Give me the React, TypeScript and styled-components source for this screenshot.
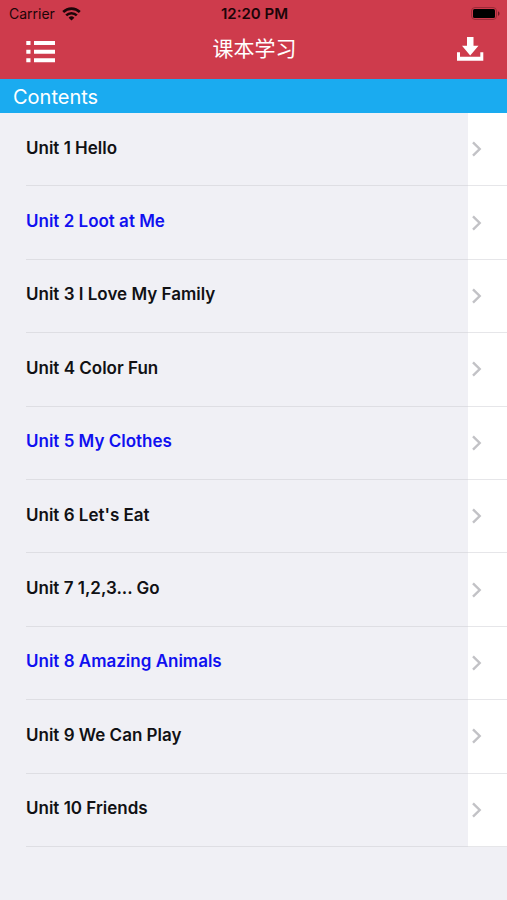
import React from 'react';
import styled, { createGlobalStyle } from 'styled-components';

const GlobalStyle = createGlobalStyle`
  * { box-sizing: border-box; }
  body {
    margin: 0;
    background: #f0f0f5;
    font-family: Inter, "Noto Sans CJK SC", sans-serif;
  }
`;

const Screen = styled.div`
  display: flex;
  flex-direction: column;
  min-height: 100vh;
`;

const Header = styled.header`
  background: #ce3b4c;
`;

const StatusBar = styled.div`
  display: grid;
  grid-template-columns: 1fr auto 1fr;
  align-items: center;
  height: 27px;
  padding: 0 7px 0 9px;
  color: #1c0508;
  font-size: 15px;
  line-height: 20px;
`;

const Carrier = styled.div`
  display: flex;
  align-items: center;
  gap: 7px;
  font-size: 14px;
`;

const Clock = styled.time`
  font-weight: 600;
`;

const Battery = styled.svg`
  justify-self: end;
`;

const NavBar = styled.nav`
  display: grid;
  grid-template-columns: 1fr auto 1fr;
  align-items: center;
  height: 52px;
  padding: 0 23px 8px 25px;
`;

const Title = styled.h1`
  margin: 0;
  color: #fff;
  font-size: 21px;
  font-weight: 400;
  line-height: 28px;
`;

const IconButton = styled.button<{ $end?: boolean }>`
  display: flex;
  justify-self: ${({ $end }) => ($end ? 'end' : 'start')};
  padding: 0;
  border: 0;
  background: none;
  color: #fff;
  cursor: pointer;
`;

const SectionTitle = styled.h2`
  margin: 0;
  padding: 3px 13px 1px;
  background: #1aabf0;
  color: #fff;
  font-size: 20px;
  font-weight: 400;
  line-height: 30px;
`;

const UnitList = styled.ul`
  display: grid;
  grid-auto-rows: 1fr;
  min-height: 734px;
  margin: 0;
  padding: 0;
  list-style: none;
`;

const UnitItem = styled.li`
  display: flex;
`;

const UnitLink = styled.a<{ $highlighted: boolean }>`
  display: flex;
  flex: 1;
  color: ${({ $highlighted }) => ($highlighted ? '#1010f0' : '#111114')};
  font-size: 17px;
  font-weight: 600;
  line-height: 24px;
  text-decoration: none;
`;

const Label = styled.span`
  display: flex;
  flex: 1;
  align-items: center;
  margin-left: 26px;
  padding-bottom: 3px;
  border-bottom: 1px solid #dedee3;
`;

const Accessory = styled.span`
  display: flex;
  align-items: center;
  width: 39px;
  padding-left: 3px;
  border-bottom: 1px solid #e6e6e9;
  background: #fff;
`;

const units = [
  { name: 'Unit 1 Hello', highlighted: false },
  { name: 'Unit 2 Loot at Me', highlighted: true },
  { name: 'Unit 3 I Love My Family', highlighted: false },
  { name: 'Unit 4 Color Fun', highlighted: false },
  { name: 'Unit 5 My Clothes', highlighted: true },
  { name: "Unit 6 Let's Eat", highlighted: false },
  { name: 'Unit 7 1,2,3... Go', highlighted: false },
  { name: 'Unit 8 Amazing Animals', highlighted: true },
  { name: 'Unit 9 We Can Play', highlighted: false },
  { name: 'Unit 10 Friends', highlighted: false },
];

const WifiIcon = () => (
  <svg width="19" height="14" viewBox="0 0 19 14" fill="none" stroke="currentColor" strokeWidth="2.6" aria-hidden="true">
    <path d="M1.2 5a11.8 11.8 0 0 1 16.6 0" />
    <path d="M4.2 8.4a7.6 7.6 0 0 1 10.6 0" />
    <path d="M9.5 13.6 6.6 10.7a4.2 4.2 0 0 1 5.8 0z" fill="currentColor" stroke="none" />
  </svg>
);

const BatteryIcon = () => (
  <Battery width="29" height="13" viewBox="0 0 29 13" role="img" aria-label="Battery full">
    <rect x="0.5" y="0.5" width="25" height="12" rx="3.5" fill="none" stroke="#9c2a38" />
    <rect x="2" y="2" width="22" height="9" rx="1.5" fill="#000" />
    <path d="M27 4.2c2 .8 2 3.8 0 4.6z" fill="#701925" />
  </Battery>
);

const MenuIcon = () => (
  <svg width="31" height="28" viewBox="0 0 31 28" fill="currentColor" aria-hidden="true">
    <path d="M1.3 6h4.2v4H1.3zM9 6h21v4H9zM1.3 14.7h4.2v4H1.3zM9 14.7h21v4H9zM1.3 23.3h4.2v4H1.3zM9 23.3h21v4H9z" />
  </svg>
);

const DownloadIcon = () => (
  <svg width="27" height="24" viewBox="0 0 27 24" fill="currentColor" aria-hidden="true">
    <path d="M10 0h6.5v8.7h5L13.2 18.5 5 8.7h5z" />
    <path d="M0 15.2h3v4.5h20.3v-4.5h3v8.5H0z" />
  </svg>
);

const Chevron = () => (
  <svg width="11" height="16" viewBox="0 0 11 16" fill="none" stroke="#c2c2c6" strokeWidth="2.4" aria-hidden="true">
    <path d="M2 1.3 8.7 8 2 14.7" />
  </svg>
);

export default function App() {
  return (
    <>
      <GlobalStyle />
      <Screen>
        <Header>
          <StatusBar>
            <Carrier>
              Carrier
              <WifiIcon />
            </Carrier>
            <Clock>12:20 PM</Clock>
            <BatteryIcon />
          </StatusBar>
          <NavBar>
            <IconButton type="button" aria-label="Menu">
              <MenuIcon />
            </IconButton>
            <Title lang="zh-CN">课本学习</Title>
            <IconButton type="button" aria-label="Download" $end>
              <DownloadIcon />
            </IconButton>
          </NavBar>
        </Header>
        <main>
          <SectionTitle>Contents</SectionTitle>
          <UnitList>
            {units.map(({ name, highlighted }) => (
              <UnitItem key={name}>
                <UnitLink href="#" $highlighted={highlighted}>
                  <Label>{name}</Label>
                  <Accessory>
                    <Chevron />
                  </Accessory>
                </UnitLink>
              </UnitItem>
            ))}
          </UnitList>
        </main>
      </Screen>
    </>
  );
}
